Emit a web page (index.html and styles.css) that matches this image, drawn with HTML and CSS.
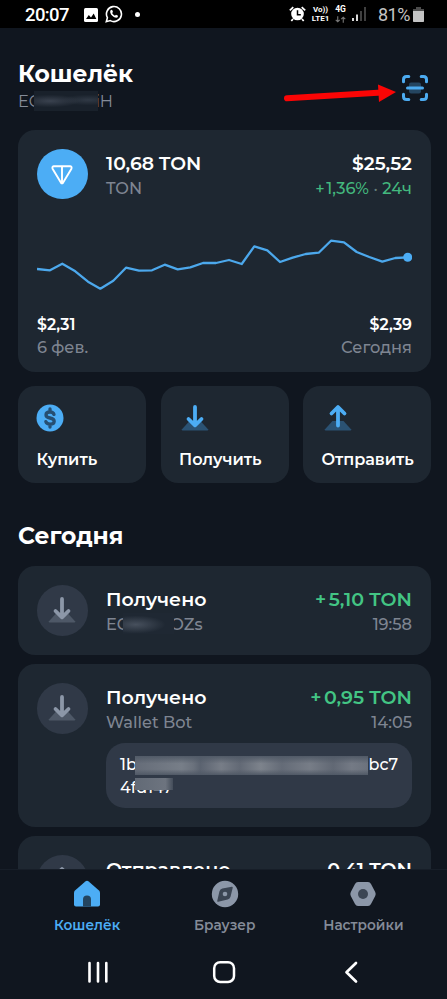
FILE: index.html
```html
<!DOCTYPE html>
<html lang="ru">
<head>
<meta charset="utf-8">
<title>Кошелёк</title>
<link rel="stylesheet" href="styles.css">
</head>
<body>
<svg width="0" height="0" class="defs">
  <symbol id="receive" viewBox="0 0 28 28">
    <path class="tray" d="M8.500 17 1 25.200Q.3 26.500 1.800 26.500H26.200Q27.700 26.500 27 25.200L19.500 17Z"/>
    <path class="arrow" d="M14 3V21M7.500 15 14 21.300 20.500 15"/>
  </symbol>
  <symbol id="send" viewBox="0 0 28 28">
    <path class="tray" d="M8.500 17 1 25.200Q.3 26.500 1.800 26.500H26.200Q27.700 26.500 27 25.200L19.500 17Z"/>
    <path class="arrow" d="M14 21.500V3.500M7.500 9.500 14 3 20.500 9.500"/>
  </symbol>
</svg>
<div class="screen">
  <header class="status">
    <span class="clock">20:07</span>
    <svg class="photo" viewBox="0 0 14 14"><rect width="14" height="14" rx="1.500" fill="#fff"/><path d="M2 11 4.800 7 7 9.500 9.700 5.500 12.300 11Z" fill="#000"/></svg>
    <svg class="chat" viewBox="0 0 18 18"><path d="M1.300 16.700 2.400 12.700A7.500 7.500 0 1 1 5.300 15.600Z" fill="none" stroke="#fff" stroke-width="1.600"/><path d="M6.500 4.800Q4.500 5.500 5.300 7.800 6.800 12 11.300 12.800 13.200 12.500 13 10.700L11 9.700 9.900 10.800Q7.900 9.900 7.100 8.100L8 7 7.200 4.900Z" fill="#fff"/></svg>
    <i class="dot"></i>
    <span class="gap"></span>
    <svg class="alarm" viewBox="0 0 17 16"><circle cx="8.500" cy="8" r="6.300" fill="#fff"/><path d="M.8 4.300 4.300 1.200M16.200 4.300 12.700 1.200M4 13 2.300 15M13 13l1.700 2" stroke="#fff" stroke-width="1.800"/><path d="M8.500 4.300V8.800H11.800" fill="none" stroke="#000" stroke-width="1.500"/></svg>
    <span class="lte"><b>Vo))</b><b>LTE1</b></span>
    <span class="net"><b>4G</b><svg viewBox="0 0 12 7"><path d="M3 0V6M.8 3.800 3 6 5.200 3.800M9 7V1M6.800 3.200 9 1 11.200 3.200" fill="none" stroke="#777" stroke-width="1.200"/></svg></span>
    <svg class="signal" viewBox="0 0 14 14"><path d="M1 11V14M5 7.500V14" stroke="#fff" stroke-width="1.700"/><path d="M9 4V14M13 0V14" stroke="#555" stroke-width="1.500"/></svg>
    <span class="percent">81%</span>
    <svg class="battery" viewBox="0 0 11 15"><path d="M3 0H8V2H11V15H0V2H3Z" fill="#4c4c4c"/><path d="M0 4H11V14Q11 15 10 15H1Q0 15 0 14Z" fill="#c4c4c4"/></svg>
  </header>

  <main class="content">
    <section class="head">
      <div>
        <h1 class="title">Кошелёк</h1>
        <p class="address">EQ<span class="skip"></span>iH<i class="smudge smudge-head"></i></p>
      </div>
      <svg class="scan" viewBox="0 0 26 26"><rect x="7" y="7.500" width="12" height="11" rx="2" fill="#244560"/><path d="M1.500 6.800V4.500Q1.500 1.500 4.500 1.500H6.800M19.200 1.500H21.500Q24.500 1.500 24.500 4.500V6.800M24.500 19.200V21.500Q24.500 24.500 21.500 24.500H19.200M6.800 24.500H4.500Q1.500 24.500 1.500 21.500V19.200M5.500 13H20.500" fill="none" stroke="#4cabf0" stroke-width="3" stroke-linecap="round"/></svg>
      <svg class="pointer" viewBox="0 0 112 20"><path d="M3 14.300 98 8.500" stroke="#fb0505" stroke-width="6" stroke-linecap="round"/><path d="M94 .5 112 8 95 18Z" fill="#fb0505"/></svg>
    </section>

    <section class="card balance">
      <div class="row">
        <span class="coin"><svg viewBox="0 0 22 20"><path d="M2.800 1.200H19.200Q21.300 1.800 20.300 4L12 17.800Q11 19 10 17.800L1.700 4Q.7 1.800 2.800 1.200ZM11 1.200V18" fill="none" stroke="#fff" stroke-width="1.900" stroke-linejoin="round"/></svg></span>
        <div class="lines"><div class="main">10,68 TON</div><div class="sub">TON</div></div>
        <div class="lines right"><div class="main">$25,52</div><div class="sub change"><i>+</i>1,36% <em>·</em> 24ч</div></div>
      </div>
      <svg class="chart" viewBox="37 230 375 70"><polyline fill="none" stroke="#4ca8ec" stroke-width="2.300" stroke-linejoin="round" points="37,269 50,270.300 62.300,263.700 75.300,271.300 88,281.700 100.300,288.700 113.300,280.700 126,267.700 139,270.700 152,270.300 164.700,264.700 177.700,269.300 190.300,267.300 203,263 216,263 229,260 241.700,264 254.300,246.300 267.300,250.300 280,262 292.700,257.700 305.700,254 318.700,252.700 331,240.700 344,242.300 356.700,252 369.300,257 382.300,261.700 395.300,258 407.700,257.300"/><circle cx="407.700" cy="257.300" r="4.500" fill="#4cadf5"/></svg>
      <div class="range">
        <div><div class="price">$2,31</div><div class="sub">6 фев.</div></div>
        <div class="right"><div class="price">$2,39</div><div class="sub">Сегодня</div></div>
      </div>
    </section>

    <section class="actions">
      <div class="card action"><svg viewBox="0 0 28 28"><circle cx="14" cy="14" r="13.500" fill="#4cadf5"/><path d="M18 10.400Q17.200 8 14 8 10 8 10 11 10 13.300 14 14 18.200 14.800 18.200 17.300 18.200 20.200 14 20.200 10.600 20.200 9.800 17.600M14 5V8M14 20.200V23" fill="none" stroke="#264f72" stroke-width="3.300" stroke-linecap="round"/></svg><span>Купить</span></div>
      <div class="card action"><svg class="shift"><use href="#receive"/></svg><span>Получить</span></div>
      <div class="card action"><svg class="shift"><use href="#send"/></svg><span>Отправить</span></div>
    </section>

    <h2 class="title day">Сегодня</h2>

    <section class="history">
      <article class="card tx">
        <div class="row">
          <span class="badge"><svg><use href="#receive"/></svg></span>
          <div class="lines"><div class="main">Получено</div><div class="sub from">EQ<span class="skip"></span>OZs<i class="smudge smudge-tx"></i></div></div>
          <div class="lines right"><div class="main plus">+<span>5,10 TON</span></div><div class="sub">19:58</div></div>
        </div>
      </article>
      <article class="card tx">
        <div class="row">
          <span class="badge"><svg><use href="#receive"/></svg></span>
          <div class="lines"><div class="main">Получено</div><div class="sub">Wallet Bot</div></div>
          <div class="lines right"><div class="main plus">+<span>0,95 TON</span></div><div class="sub">14:05</div></div>
        </div>
        <div class="comment">
          <p>1b<span class="skip"></span>bc7<i class="smudge smudge-long"></i></p>
          <p>4fd147<i class="smudge smudge-short"></i></p>
        </div>
      </article>
      <article class="card tx">
        <div class="row">
          <span class="badge"><svg><use href="#send"/></svg></span>
          <div class="lines"><div class="main">Отправлено</div></div>
          <div class="lines right"><div class="main">0,41 TON</div></div>
        </div>
      </article>
    </section>
  </main>

  <nav class="tabs">
    <div class="tab active"><svg viewBox="0 0 28 28"><path d="M12.300 1.500Q14 .2 15.700 1.500L26 10.600Q27 11.500 27 13V24.500Q27 26.500 25 26.500H3Q1 26.500 1 24.500V13Q1 11.500 2 10.600Z" fill="#4cadf5"/><path d="M10 26.500V19.500Q10 15.500 14 15.500T18 19.500V26.500Z" fill="#244560"/></svg><span>Кошелёк</span></div>
    <div class="tab"><svg viewBox="0 0 28 28"><circle cx="14" cy="14" r="13.200" fill="#8c97a8"/><path d="M21 7.500 18.800 16.500Q18.300 18.300 16.500 18.800L7 21 9.200 11.500Q9.700 9.700 11.500 9.200Z" fill="#3b4553" stroke="#3b4553" stroke-width="1.500" stroke-linejoin="round"/><circle cx="14" cy="14" r="2.300" fill="#8c97a8"/></svg><span>Браузер</span></div>
    <div class="tab"><svg viewBox="0 0 28 28"><path d="M9 2H19Q21 2 22 4L26.200 12Q27.200 14 26.200 16L22 24Q21 26 19 26H9Q7 26 6 24L1.800 16Q.8 14 1.800 12L6 4Q7 2 9 2Z" fill="#8c97a8"/><circle cx="14" cy="14" r="5" fill="#3b4553"/></svg><span>Настройки</span></div>
  </nav>
  <footer class="keys">
    <svg viewBox="0 0 22 24"><path d="M2.500 3V21.500M11 3V21.500M19.300 3V21.500" stroke="#fff" stroke-width="2.600" stroke-linecap="round"/></svg>
    <svg viewBox="0 0 24 24"><rect x="2.200" y="2.200" width="19.800" height="19.800" rx="6" fill="none" stroke="#fff" stroke-width="2.500"/></svg>
    <svg viewBox="0 0 14 24"><path d="M12 3 2.500 12.300 12 21.500" fill="none" stroke="#fff" stroke-width="2.700" stroke-linecap="round" stroke-linejoin="round"/></svg>
  </footer>
</div>
</body>
</html>
```

FILE: styles.css
```css
* { box-sizing: border-box; margin: 0; padding: 0; }
body { background: #10161f; font-family: Montserrat, Inter, sans-serif; color: #fff; }
svg { display: block; flex: none; }
.defs { position: absolute; }
.screen { width: 447px; height: 999px; display: flex; flex-direction: column; overflow: hidden; }
.status { height: 28px; flex: none; background: #000; display: flex; align-items: center; padding: 0 23px 0 25px; font-family: Roboto, sans-serif; }
.clock { font-size: 18.500px; font-weight: 500; width: 59px; line-height: 28px; padding-top: 1px; letter-spacing: -.6px; }
.photo { width: 14px; height: 14px; margin-top: 1px; }
.chat { width: 18px; height: 18px; margin-left: 7px; }
.dot { width: 5px; height: 5px; border-radius: 50%; background: #fff; margin-left: 12px; }
.gap { flex: 1; }
.alarm { width: 17px; height: 16px; }
.lte { margin-left: 4px; width: 21px; font-size: 8px; line-height: 9.500px; display: flex; flex-direction: column; align-items: center; white-space: nowrap; }
.net { margin-left: 2px; width: 15px; font-size: 8.500px; line-height: 9.500px; display: flex; flex-direction: column; align-items: center; }
.net svg { width: 11px; height: 7px; margin-top: 1px; }
.signal { width: 14px; height: 14px; margin-left: 4px; }
.percent { font-size: 18px; color: #c4c4c4; margin-left: 12px; width: 35px; letter-spacing: -.5px; padding-top: 1px; }
.battery { width: 11px; height: 15px; }

.content { flex: none; height: 840.500px; padding: 0 16px 0 18px; overflow: hidden; }
.head { position: relative; height: 101.500px; padding: 31px 3px 0 0; display: flex; justify-content: space-between; }
.title { font-size: 23.400px; line-height: 29px; font-weight: 700; }
.address { position: relative; display: flex; font-size: 16.200px; line-height: 26px; width: 95px; justify-content: space-between; color: #848b98; }
.skip { flex: 1; }
.smudge { position: absolute; }
.smudge-head { left: 16px; top: 3px; width: 64px; height: 20px; background: radial-gradient(ellipse at 25% 50%, #3a424f, transparent 45%), radial-gradient(ellipse at 85% 45%, #303945, transparent 35%), #19212b; }
.scan { width: 26px; height: 26px; margin-top: 16px; }
.pointer { position: absolute; left: 266px; top: 56px; width: 112px; height: 20px; z-index: 1; }
.card { background: #1e2731; border-radius: 17px; width: 413px; }
.balance { height: 242.500px; padding: 19px; }
.row { display: flex; }
.coin, .badge { width: 50.500px; height: 50.500px; border-radius: 50%; display: grid; place-items: center; flex: none; background: #4cadf5; }
.coin svg { width: 22px; height: 20px; margin-top: 3px; }
.lines { margin-left: 18.500px; padding-top: 2px; white-space: nowrap; }
.right { text-align: right; }
.lines.right { margin-left: auto; }
.main { font-size: 18.800px; line-height: 25px; font-weight: 600; }
.sub { font-size: 16.200px; line-height: 25px; font-weight: 500; color: #7e8591; }
.change { color: #43b87e; letter-spacing: .05px; }
.change i { font-style: normal; margin-right: 1.500px; }
.change em { color: #657c78; font-style: normal; }
.chart { width: 375px; height: 70px; margin-top: 29px; }
.range { display: flex; justify-content: space-between; margin-top: 14px; }
.price { font-size: 15.800px; line-height: 22px; font-weight: 600; }
.range .sub { margin-top: -1px; }
.actions { display: flex; gap: 14.500px; width: 413px; margin-top: 13.500px; }
.action { flex: 1; height: 97.500px; padding: 18.500px 0 0 18.500px; white-space: nowrap; }
.action svg { width: 28px; height: 28px; margin-left: -.5px; }
.action .shift { margin-left: 2px; }
.action span { display: block; margin-top: 14px; font-size: 16.100px; line-height: 26px; font-weight: 600; }
.day { margin-top: 37.500px; }
.history { display: flex; flex-direction: column; gap: 9.500px; margin-top: 16.500px; }
.tx { padding: 19px; height: 88.500px; flex: none; }
.tx:nth-child(2) { height: 162.500px; }
.tx .main { font-size: 19px; }
.badge { background: #303947; }
.badge svg { width: 28px; height: 28px; --tray: #4e5867; --arrow: #8c97a8; }
.tray { fill: var(--tray, #2b5273); }
.arrow { fill: none; stroke: var(--arrow, #4cadf5); stroke-width: 3.800; stroke-linecap: round; stroke-linejoin: round; }
.plus { color: #43c584; }
.plus span { margin-left: 2.500px; }
.from { position: relative; display: flex; width: 96.500px; }
.smudge-tx { left: 17px; top: 1px; width: 51px; height: 21px; background: radial-gradient(ellipse at 25% 55%, #47505d, transparent 55%), #1f2833; }
.comment { width: 306px; height: 65px; border-radius: 19px; margin: 7.500px 0 0 69px; background: #303947; padding: 10px 14px; font-size: 16px; font-weight: 500; line-height: 23px; }
.comment p { position: relative; display: flex; }
.smudge-long { left: 15px; top: 3px; width: 233px; height: 19px; background: linear-gradient(#515a67, transparent 40%, transparent 70%, #505966), linear-gradient(90deg, #656c78, #777e88 20%, #6b727d 25%, #5b6370 28%, #777d87 37%, #626975 45%, #7d838c 54%, #646b77 63%, #777d87 75%, #616874 85%, #747a85 93%, #6b727d); }
.smudge-short { left: 15px; top: 2px; width: 38px; height: 12px; background: linear-gradient(90deg, #626a76, #6d747f 80%, #444d5a); }

.tabs { height: 77.500px; flex: none; border-top: 1px solid #171e28; display: flex; justify-content: space-between; padding: 10.500px 43.500px 0 54px; }
.tab { display: flex; flex-direction: column; align-items: center; color: #848b98; }
.tab:nth-child(2) { margin-left: 6px; }
.tab svg { width: 28px; height: 28px; }
.tab span { font-size: 13.700px; line-height: 20px; font-weight: 600; margin-top: 6.500px; }
.tab.active { color: #4cadf5; }
.keys { flex: 1; display: flex; justify-content: space-between; padding: 14px 89px 0 87px; }
.keys svg { height: 24px; }
.keys svg:nth-child(1) { width: 22px; }
.keys svg:nth-child(2) { width: 24px; margin-left: -6px; }
.keys svg:nth-child(3) { width: 14px; }
```
